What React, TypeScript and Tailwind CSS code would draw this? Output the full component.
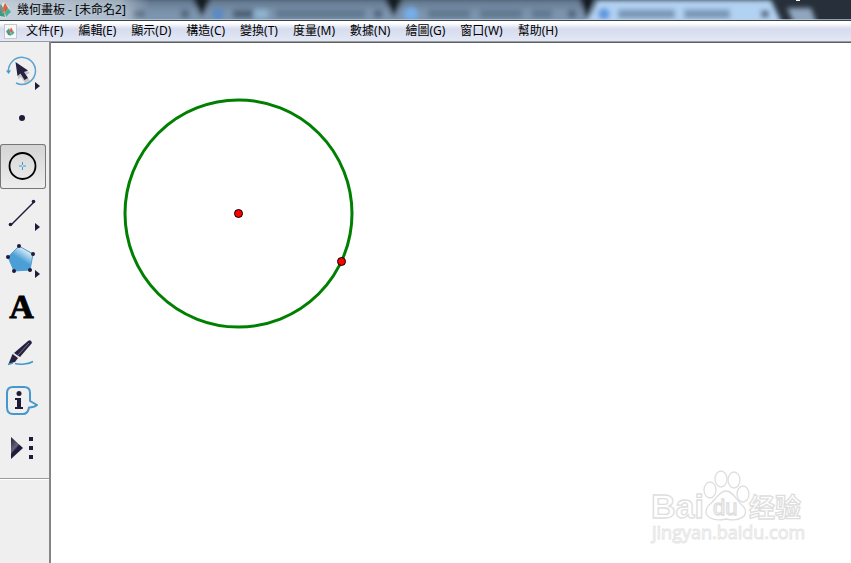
import type { ReactNode } from "react";

const menus = ["文件(F)", "編輯(E)", "顯示(D)", "構造(C)", "變換(T)", "度量(M)", "數據(N)", "繪圖(G)", "窗口(W)", "幫助(H)"];

function AppLogo({ className }: { className: string }) {
  return (
    <svg className={className} viewBox="0 0 16 16" aria-hidden="true">
      <path d="M8 0 L13 5 L14 12 L8 16 L2 14 L0 8Z" fill="#e9e2d8" />
      <path d="M5 2 L8 8 L5 14 L0 8Z" fill="#4f9b9b" />
      <path d="M9 1 L12 6 L9 11 L7 6Z" fill="#d9573f" />
      <path d="M12 6 L15 10 L10 15 L9 11Z" fill="#3fb39a" />
      <path d="M2 8 L8 11 L9 15 L4 14Z" fill="#2f9f8b" />
      <path d="M4 4 L9 12 M10 4 L6 12" fill="none" stroke="#d27a5c" strokeWidth="1" />
    </svg>
  );
}

function GlassBackdrop() {
  return (
    <svg className="absolute left-0 top-0 h-5 w-[851px]" viewBox="0 0 851 20" aria-hidden="true">
      <defs>
        <filter id="glass" x="-5%" y="-50%" width="110%" height="200%">
          <feGaussianBlur stdDeviation="2.6" />
        </filter>
        <linearGradient id="tabs" x1="0" x2="0" y1="0" y2="1">
          <stop offset="0" stopColor="#5b6f85" />
          <stop offset="0.4" stopColor="#7b92ab" />
          <stop offset="1" stopColor="#8099b3" />
        </linearGradient>
        <linearGradient id="glow" x1="0" x2="1" y1="0" y2="0">
          <stop offset="0" stopColor="#dfe6ec" stopOpacity="0.75" />
          <stop offset="0.8" stopColor="#cbd6e0" stopOpacity="0.6" />
          <stop offset="1" stopColor="#cbd6e0" stopOpacity="0" />
        </linearGradient>
      </defs>
      <rect width="851" height="20" fill="#27303a" />
      <g filter="url(#glass)">
        <path d="M-20 -2 H582 L594 30 H-20Z" fill="url(#tabs)" />
        <path d="M191 -4 H212 L202 17Z M383 -4 H404 L394 17Z M577 -8 H597 L587 20Z" fill="#141b23" />
        <path d="M597 0 H771 L785 30 H583Z" fill="#b2d2f3" />
        <path d="M787 8 H811 L817 24 H794Z" fill="#90a6be" />
        <circle cx="218" cy="14" r="6" fill="#5889c5" />
        <circle cx="411" cy="14" r="7" fill="#75aee9" />
        <circle cx="604" cy="14" r="6" fill="#5c97df" />
        <path d="M133 14 H145 M233 14 H253" stroke="#4b5f75" strokeWidth="8" />
        <path d="M254 14 H268" stroke="#8fb3d0" strokeWidth="9" />
        <path d="M276 14 H365 M428 14 H470 M480 14 H522 M532 14 H552" stroke="#61788f" strokeWidth="8" />
        <path d="M618 14 H675 M684 14 H730" stroke="#7895b5" strokeWidth="9" />
        <path d="M181 14 H189 M374 14 H382 M568 14 H576 M761 14 H769" stroke="#4d6277" strokeWidth="7" />
      </g>
      <rect width="150" height="20" fill="url(#glow)" />
      <rect y="19" width="851" height="1" fill="#c3d2df" opacity="0.7" />
      <rect x="796" width="4" height="1" fill="#fff" />
    </svg>
  );
}

function Icon({ children }: { children: ReactNode }) {
  return (
    <svg className="h-[45px] w-[46px] shrink-0" viewBox="0 0 46 45" fill="none" aria-hidden="true">
      {children}
    </svg>
  );
}

const tools: { name: string; icon: ReactNode }[] = [
  {
    name: "移動箭頭工具",
    icon: (
      <>
        <path d="M8.500 22 A13.500 13.500 0 1 1 16 33" stroke="#5ba3d2" strokeWidth="1.500" />
        <path d="M6 20.500 H11 L8.500 24Z" fill="#4298cc" />
        <path d="M17 14 L18 29 L21 27 L25 33 L30 31 L26 25 L30 23Z" fill="#aaa" opacity=".6" />
        <path d="M15.500 12 L17.500 26 L20.500 23.500 L24.500 30 L28 28 L24 22 L28 20.500Z" fill="#25213e" />
        <path d="M35 32 V40 L40 36Z" fill="#1f1b3a" />
      </>
    ),
  },
  { name: "點工具", icon: <circle cx="22" cy="21" r="3" fill="#1f1b3a" /> },
  {
    name: "圓工具",
    icon: (
      <>
        <circle cx="22.500" cy="22" r="13" stroke="#000" strokeWidth="1.800" />
        <path d="M22.500 18 V21 M22.500 23 V26 M19 22 H22 M23 22 H26" stroke="#3f9ad0" />
      </>
    ),
  },
  {
    name: "線段直尺工具",
    icon: (
      <>
        <path d="M11 34 L34 11" stroke="#1f1b3a" strokeWidth="1.400" />
        <circle cx="10.500" cy="33.500" r="1.800" fill="#1f1b3a" />
        <circle cx="33.500" cy="10.500" r="1.800" fill="#1f1b3a" />
        <path d="M35 32 V40 L40 36Z" fill="#1f1b3a" />
      </>
    ),
  },
  {
    name: "多邊形工具",
    icon: (
      <>
        <defs>
          <linearGradient id="poly" gradientUnits="userSpaceOnUse" x1="29" y1="10" x2="18" y2="27">
            <stop offset="0.100" stopColor="#4c9fd6" />
            <stop offset="0.200" stopColor="#d2e7f5" />
            <stop offset="0.700" stopColor="#4c9fd6" />
          </linearGradient>
        </defs>
        <path d="M19 8 L33 16 L30 32 L14 33 L8 19Z" fill="url(#poly)" stroke="#4c9fd6" />
        <g fill="#1f1b3a">
          <circle cx="19" cy="8" r="2" />
          <circle cx="33" cy="16" r="2" />
          <circle cx="30" cy="32" r="2" />
          <circle cx="14" cy="33" r="2" />
          <circle cx="8" cy="19" r="2" />
          <path d="M35 32 V40 L40 36Z" />
        </g>
      </>
    ),
  },
  {
    name: "文本工具",
    icon: (
      <text
        x="21.500"
        y="33"
        textAnchor="middle"
        fontSize="34"
        fontWeight="700"
        fill="#000"
        stroke="#000"
        strokeWidth="0.800"
        className="font-['Liberation_Serif',serif]"
      >
        A
      </text>
    ),
  },
  {
    name: "標記工具",
    icon: (
      <>
        <path d="M28 9 Q31 7 32 11 L20 25 L14 21Z" fill="#25213e" />
        <path d="M12.500 22 L18 26 L15 30 L8.500 32Z" fill="#25213e" />
        <path d="M13 21 L19 26" stroke="#d5d5dc" strokeWidth="1" />
        <path d="M29 11 L18 23" stroke="#77758a" strokeWidth="1" />
        <path d="M8 32.500 L13 31 M15 31.500 C20 33 29 32 33 29.500" stroke="#4298cc" strokeWidth="1.500" />
      </>
    ),
  },
  {
    name: "信息工具",
    icon: (
      <>
        <path
          d="M13 8 H24 Q30 8 30 14 V22 L37 26 Q34 28.500 29 28.500 Q28 35 23 35 H13 Q7 35 7 28 V14 Q7 8 13 8Z"
          stroke="#4597ce"
          strokeWidth="2"
          strokeLinejoin="round"
        />
        <circle cx="19" cy="14.500" r="2.500" fill="#1f1b3a" />
        <path d="M15 19 H21 V28 H23 V30 H15 V28 H17 V21 H15Z" fill="#1f1b3a" />
      </>
    ),
  },
  {
    name: "自定義工具",
    icon: (
      <>
        <defs>
          <linearGradient id="play" x1="0" y1="0" x2="0.600" y2="1">
            <stop offset="0" stopColor="#1f1b3a" />
            <stop offset="0.500" stopColor="#64647a" />
            <stop offset="0.600" stopColor="#1f1b3a" />
          </linearGradient>
        </defs>
        <path d="M11 11 L23 22 L11 33Z" fill="url(#play)" />
        <path d="M29 11 h4 v4 h-4Z M29 20 h4 v4 h-4Z M29 29 h4 v4 h-4Z" fill="#1f1b3a" />
      </>
    ),
  },
];

function Toolbox() {
  return (
    <aside className="w-[51px] shrink-0 border-r-2 border-[#858585] bg-[#efefef]">
      <div className="flex flex-col gap-[2px] border-b border-[#9a9a9a] pt-2 pb-[7px]">
        {tools.map((tool, i) => (
          <button
            key={tool.name}
            type="button"
            aria-label={tool.name}
            aria-pressed={i === 2}
            className={
              i === 2
                ? "flex h-[45px] w-[46px] items-center justify-center rounded-[3px] bg-linear-to-b from-[#d4d4d4] to-[#eeeeee] ring-1 ring-[#777777] ring-inset"
                : "flex h-[45px] w-[46px] items-center justify-center"
            }
          >
            <Icon>{tool.icon}</Icon>
          </button>
        ))}
      </div>
      <div className="h-px bg-white" />
    </aside>
  );
}

function Watermark() {
  return (
    <svg
      className="absolute right-[43px] bottom-4 h-[78px] w-[160px]"
      viewBox="0 0 160 78"
      fill="#fff"
      stroke="#dedede"
      strokeWidth="1.300"
      role="img"
      aria-label="Baidu 经验"
    >
      <text x="3" y="49" fontSize="34" fontWeight="700" className="font-['Liberation_Sans',sans-serif]">Bai</text>
      <ellipse cx="62" cy="21" rx="6" ry="8" />
      <ellipse cx="73" cy="10" rx="6" ry="8" />
      <ellipse cx="86" cy="11" rx="6" ry="8" />
      <ellipse cx="95" cy="25" rx="6" ry="8" />
      <path d="M78 22 C85 22 88 31 95 37 C103 47 91 53 78 50 C66 53 53 48 60 37 C68 31 71 22 78 22Z" />
      <text x="65" y="46" fontSize="22" className="font-['Liberation_Sans',sans-serif]">du</text>
      <text x="101" y="48" fontSize="26" fontWeight="700" className="font-['Noto_Sans_CJK_SC',sans-serif]">经验</text>
      <text x="4" y="70" fontSize="18" stroke="#e6e6e6" strokeWidth="1" className="font-['Open_Sans',sans-serif]">jingyan.baidu.com</text>
    </svg>
  );
}

export default function App() {
  return (
    <div className="flex h-screen flex-col overflow-hidden bg-white font-['Noto_Sans','Noto_Sans_CJK_TC',sans-serif] text-xs text-black">
      <header className="relative flex h-5 shrink-0 items-center overflow-hidden bg-[#27303a]">
        <GlassBackdrop />
        <div className="relative flex items-center gap-[5px]">
          <AppLogo className="-ml-1 h-4 w-4" />
          <h1 className="leading-5">幾何畫板 - [未命名2]</h1>
        </div>
      </header>
      <nav
        aria-label="主選單"
        className="flex h-[22px] shrink-0 items-center border-t border-b border-t-[#3c444d] border-b-[#9a9ca4] bg-linear-to-b from-white from-10% via-[#d6dcee] via-40% to-[#e3e8f6]"
      >
        <span className="ml-1 flex h-[15px] w-[13px] items-center justify-center border border-[#c4c8ce] bg-[#f8f8f8]">
          <AppLogo className="h-[9px] w-[9px]" />
        </span>
        <div className="ml-[2px] flex gap-px">
          {menus.map((menu) => (
            <button key={menu} type="button" className="px-[7px] leading-5 whitespace-nowrap">
              {menu}
            </button>
          ))}
        </div>
      </nav>
      <div className="flex min-h-0 flex-1">
        <Toolbox />
        <main className="relative min-w-0 flex-1 border-t border-[#606060] bg-white">
          <svg className="block h-[300px] w-[320px]" viewBox="0 0 320 300" role="img" aria-label="圓">
            <circle cx="187.500" cy="170.500" r="113.500" fill="none" stroke="#008000" strokeWidth="3" />
            <circle cx="187.500" cy="170.500" r="4" fill="#f00" stroke="#000" />
            <circle cx="290.500" cy="218.500" r="4" fill="#f00" stroke="#000" />
          </svg>
          <Watermark />
        </main>
      </div>
    </div>
  );
}
